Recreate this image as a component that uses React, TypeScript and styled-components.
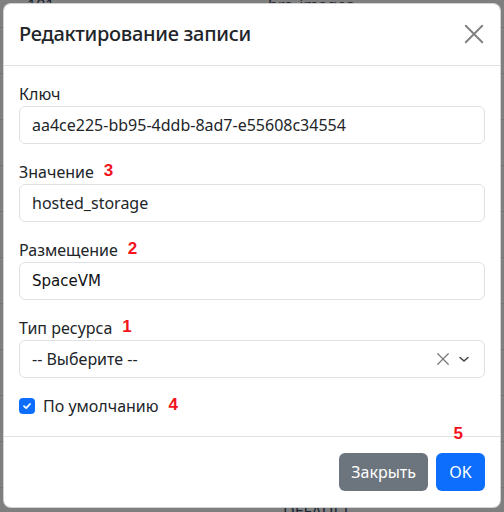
import styled, { createGlobalStyle } from 'styled-components'

const GlobalStyle = createGlobalStyle`
  html, body {
    margin: 0;
    padding: 0;
    width: 504px;
    height: 512px;
    overflow: hidden;
    font-family: "Noto Sans", "Open Sans", sans-serif;
    color: #212529;
  }
  * { box-sizing: border-box; }
`;

const Page = styled.div`
  position: relative;
  width: 504px;
  height: 512px;
  background: #fff;
  overflow: hidden;
`;

const BackTable = styled.div`
  display: flex;
  flex-direction: column;
  margin-top: -18px;
`;

const BackRow = styled.div`
  display: grid;
  grid-template-columns: 241px 1fr;
  height: 46px;
  align-items: center;
  padding-left: 27px;
  border-bottom: 1px solid #dee2e6;
  font-size: 16px;
  color: #3a4c66;
`;

const BackCell = styled.span<{ $indent?: number }>`
  padding-left: ${p => p.$indent ?? 0}px;
`;

const Backdrop = styled.div`
  position: absolute;
  inset: 0;
  background: rgba(0, 0, 0, 0.5);
  padding: 3px;
`;

const Modal = styled.div`
  position: relative;
  background: #fff;
  border-radius: 8px;
  border: 1px solid rgba(0, 0, 0, 0.175);
  display: flex;
  flex-direction: column;
`;

const Header = styled.div`
  display: flex;
  align-items: center;
  justify-content: space-between;
  padding: 15px 16px 16px 15px;
  border-bottom: 1px solid #dee2e6;
`;

const Title = styled.h5`
  margin: 0;
  font-size: 20px;
  font-weight: 500;
  line-height: 30px;
  letter-spacing: -0.3px;
`;

const CloseBtn = styled.button`
  border: none;
  background: transparent;
  width: 24px;
  height: 24px;
  padding: 0;
  display: flex;
  align-items: center;
  justify-content: center;
  margin-right: -2px;
`;

const Body = styled.div`
  padding: 16px 15px 18px 15px;
  display: flex;
  flex-direction: column;
  gap: 16px;
`;

const Field = styled.div`
  display: flex;
  flex-direction: column;
`;

const Label = styled.label`
  display: flex;
  align-items: center;
  height: 24px;
  font-size: 16px;
  line-height: 24px;
  color: #212529;
`;

const Mark = styled.span`
  color: #f4121c;
  font-family: "Liberation Sans", Arial, sans-serif;
  font-weight: 700;
  font-size: 17px;
  line-height: 20px;
  margin-left: 10px;
  margin-top: -3px;
`;

const Input = styled.div<{ $alt?: boolean }>`
  height: 38px;
  border: 1px solid #dee2e6;
  border-radius: 6px;
  padding: 0 12px;
  display: flex;
  align-items: center;
  font-size: ${p => (p.$alt ? '15px' : '16px')};
  font-family: ${p => (p.$alt ? '"DejaVu Sans", sans-serif' : 'inherit')};
  color: ${p => (p.$alt ? '#111' : '#212529')};
`;

const Select = styled(Input)`
  justify-content: space-between;
  padding-right: 14px;
`;

const SelectIcons = styled.div`
  display: flex;
  align-items: center;
  gap: 8px;
`;

const CheckRow = styled.div`
  display: flex;
  align-items: center;
  height: 24px;
  font-size: 16px;
`;

const Check = styled.span`
  width: 16px;
  height: 16px;
  border-radius: 4px;
  background: #0d6efd;
  display: flex;
  align-items: center;
  justify-content: center;
  margin: 0 8px 0 0;
`;

const Footer = styled.div`
  position: relative;
  display: flex;
  justify-content: flex-end;
  gap: 8px;
  padding: 16px 15px 16px;
  border-top: 1px solid #dee2e6;
`;

const Button = styled.button<{ $variant: 'secondary' | 'primary' }>`
  height: 38px;
  min-width: 49px;
  padding: 0 12px;
  border: none;
  border-radius: 6px;
  font-family: inherit;
  font-size: 16px;
  color: #fff;
  background: ${p => (p.$variant === 'primary' ? '#0d6efd' : '#6c757d')};
`;

const FooterMark = styled.span`
  position: absolute;
  top: -13px;
  right: 37px;
  color: #f4121c;
  font-family: "Liberation Sans", Arial, sans-serif;
  font-weight: 700;
  font-size: 17px;
`;

const Cross = ({ size, color }: { size: number; color: string }) => (
  <svg width={size} height={size} viewBox="0 0 16 16">
    <path d="M2 2L14 14M14 2L2 14" stroke={color} strokeWidth="1.4" strokeLinecap="round" />
  </svg>
);

const emptyRows = Array.from({ length: 10 });

function App() {
  return (
    <Page>
      <GlobalStyle />
      <BackTable>
        <BackRow><BackCell>101</BackCell><BackCell>hrs_images</BackCell></BackRow>
        {emptyRows.map((_, i) => (
          <BackRow key={i}><BackCell /><BackCell /></BackRow>
        ))}
        <BackRow><BackCell /><BackCell $indent={15}>DEFAULT</BackCell></BackRow>
      </BackTable>
      <Backdrop>
        <Modal>
          <Header>
            <Title>Редактирование записи</Title>
            <CloseBtn aria-label="close">
              <Cross size={22} color="#808080" />
            </CloseBtn>
          </Header>
          <Body>
            <Field>
              <Label>Ключ</Label>
              <Input>aa4ce225-bb95-4ddb-8ad7-e55608c34554</Input>
            </Field>
            <Field>
              <Label>Значение<Mark>3</Mark></Label>
              <Input>hosted_storage</Input>
            </Field>
            <Field>
              <Label>Размещение<Mark>2</Mark></Label>
              <Input $alt>SpaceVM</Input>
            </Field>
            <Field>
              <Label>Тип ресурса<Mark>1</Mark></Label>
              <Select>
                <span>-- Выберите --</span>
                <SelectIcons>
                  <Cross size={14} color="#777" />
                  <svg width="12" height="12" viewBox="0 0 12 12">
                    <path d="M2 4.5L6 8L10 4.5" stroke="#444" strokeWidth="1.6" fill="none" strokeLinecap="round" strokeLinejoin="round" />
                  </svg>
                </SelectIcons>
              </Select>
            </Field>
            <CheckRow>
              <Check>
                <svg width="10" height="10" viewBox="0 0 10 10">
                  <path d="M2 5.2L4.2 7.2L8 3" stroke="#fff" strokeWidth="1.8" fill="none" strokeLinecap="round" strokeLinejoin="round" />
                </svg>
              </Check>
              По умолчанию<Mark>4</Mark>
            </CheckRow>
          </Body>
          <Footer>
            <FooterMark>5</FooterMark>
            <Button $variant="secondary">Закрыть</Button>
            <Button $variant="primary">OK</Button>
          </Footer>
        </Modal>
      </Backdrop>
    </Page>
  )
}

export default App
